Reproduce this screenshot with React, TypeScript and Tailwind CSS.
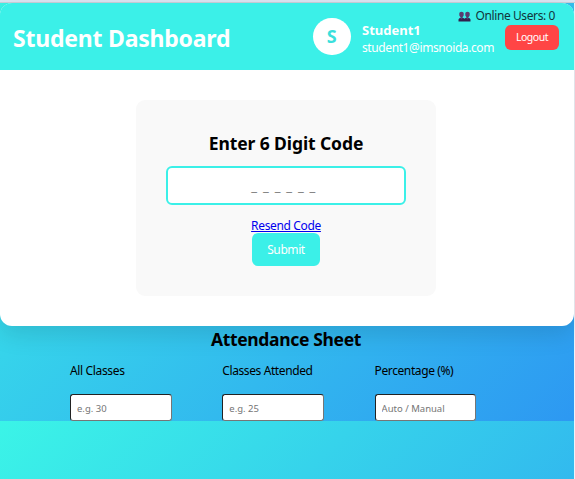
import React from "react";

const fields = [
  { label: "All Classes", placeholder: "e.g. 30", track: "tracking-[-0.35px]" },
  { label: "Classes Attended", placeholder: "e.g. 25", track: "tracking-[-0.4px]" },
  { label: "Percentage (%)", placeholder: "Auto / Manual", track: "tracking-[-0.4px]" },
];

function UsersIcon() {
  return (
    <svg width="13" height="11" viewBox="0 0 13 11" className="mt-px shrink-0">
      <path d="M0.5 10.5V8.6Q0.7 7 2.5 6.7L3.3 6.2H4L4.8 6.7Q6 7 6.5 7.8Q7 7 8.2 6.7L9 6.2H9.7L10.5 6.7Q12.3 7 12.5 8.6V10.5Z" fill="#32204d" />
      <path d="M1.2 2.7Q1.2 0.8 3.5 0.8Q5.8 0.8 5.8 2.7L5.6 4.5Q5 6.6 3.5 6.7Q2 6.6 1.4 4.5Z" fill="#593b70" />
      <path d="M7.2 2.7Q7.2 0.8 9.5 0.8Q11.8 0.8 11.8 2.7L11.6 4.5Q11 6.6 9.5 6.7Q8 6.6 7.4 4.5Z" fill="#593b70" />
      <path d="M2.6 7H4.4V8.3H2.6ZM8.6 7H10.4V8.3H8.6Z" fill="#593b70" />
    </svg>
  );
}

function Header() {
  return (
    <header className="flex h-[67px] items-center justify-between bg-[#3bf0e8] pl-[13px] pr-[15px] text-white">
      <h1 className="whitespace-nowrap pt-0.5 text-[23px] font-bold leading-8 tracking-[-0.22px]">Student Dashboard</h1>
      <div className="flex items-center">
        <div className="flex size-[37.5px] items-center justify-center rounded-full bg-white text-[18px] font-bold text-[#3bdfdc]">
          S
        </div>
        <div className="ml-[11.5px] w-[143px] whitespace-nowrap pt-[4px] text-[12px] leading-[17px]">
          <div className="text-[13px] font-bold">Student1</div>
          <div className="tracking-[-0.4px]">student1@imsnoida.com</div>
        </div>
        <button className="mt-px h-[25px] w-[54px] rounded-[6px] bg-[#ff4545] pt-px text-[10.5px] tracking-[-0.5px]">Logout</button>
      </div>
    </header>
  );
}

export default function App() {
  return (
    <div className="relative flex h-[479px] w-[575px] flex-col overflow-hidden bg-[#f0f2f8] font-['Noto_Sans','Open_Sans',sans-serif] text-black">
      <div className="h-[3px] shrink-0 border-b border-[#c9cfd9] bg-[#dce5f2]" />
      <div className="h-[418px] w-[574px] shrink-0 bg-[linear-gradient(135deg,#3bf4e7,#2d98f2)]">
        <main className="h-[323px] overflow-hidden rounded-[12px] bg-white shadow-[0_8px_24px_rgba(0,0,0,0.12)]">
          <Header />
          <section className="ml-[136px] mt-[30px] flex h-[196px] w-[300px] flex-col items-center rounded-[9px] bg-[#f9f9f9] pt-[31px]">
            <h2 className="text-[17.5px] font-bold leading-[25px] tracking-[-0.1px]">Enter 6 Digit Code</h2>
            <input
              aria-label="Code"
              placeholder="_ _ _ _ _ _"
              className="mt-[10px] h-[39px] w-[240px] rounded-[6px] border-2 border-[#3bf0e8] bg-white pr-[4px] text-center text-[13px] tracking-[1.25px] placeholder:text-[#757575]"
            />
            <a href="#" className="mt-[13px] text-[12px] leading-4 tracking-[-0.35px] text-[#0000ee] underline">Resend Code</a>
            <button className="-mt-px h-[33px] w-[68px] rounded-[6px] bg-[#3bf0e8] text-[12px] tracking-[-0.4px] text-white">Submit</button>
          </section>
        </main>
        <h2 className="pr-[2px] text-center text-[17.5px] font-bold leading-[26px] tracking-[-0.35px]">Attendance Sheet</h2>
        <div className="flex gap-[51px] pl-[70px] pt-[2px]">
          {fields.map((field) => (
            <label key={field.label} className="flex w-[101.3px] flex-col whitespace-nowrap text-[12px]">
              <span className={`mt-[9px] h-[16px] leading-4 ${field.track}`}>{field.label}</span>
              <input
                placeholder={field.placeholder}
                className="mt-[15px] h-[27px] w-[101.5px] rounded-[3px] border border-b-[#767676] border-l-[#222] border-r-[#767676] border-t-[#222] bg-white px-[6px] pt-px text-[9.5px] placeholder:text-[#757575]"
              />
            </label>
          ))}
        </div>
      </div>
      <div className="h-[58px] w-[574px] shrink-0 bg-[linear-gradient(135deg,#3bf4e7,#2d98f2)] bg-[length:574px_418px]" />
      <div className="absolute right-5 top-2 flex items-center gap-[5px] whitespace-nowrap text-[12px] leading-4 tracking-[-0.4px] text-[#12343a]">
        <UsersIcon />
        <span>Online Users: 0</span>
      </div>
    </div>
  );
}
